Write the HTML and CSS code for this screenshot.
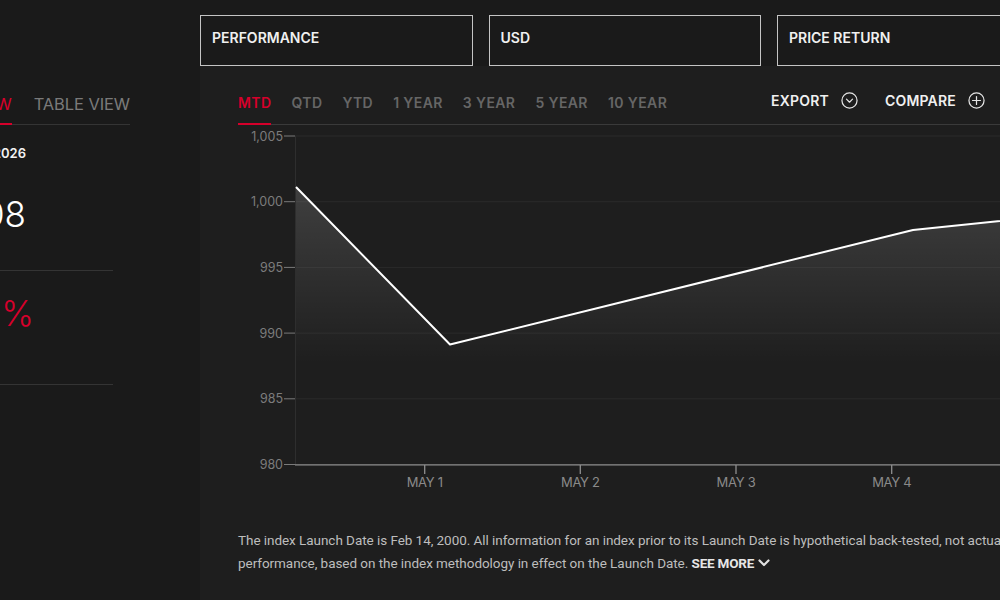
FILE: index.html
```html
<!DOCTYPE html>
<html lang="en">
<head>
<meta charset="utf-8">
<title>Index Performance</title>
<link rel="stylesheet" href="styles.css">
</head>
<body>
<div class="page">
  <aside class="side">
    <div class="view-tabs">
      <span class="view-tab active">CHART VIEW</span>
      <span class="view-tab">TABLE VIEW</span>
    </div>
    <div class="stat">
      <div class="clip-row"><span class="asof">As of May 05, 2026</span></div>
      <div class="clip-row"><span class="big">1,000.08</span></div>
    </div>
    <div class="stat stat-return">
      <div class="clip-row wide"><span class="big neg">-0.10%</span></div>
    </div>
  </aside>

  <main class="main">
    <div class="selects">
      <div class="select">PERFORMANCE</div>
      <div class="select">USD</div>
      <div class="select">PRICE RETURN</div>
    </div>

    <section class="panel">
      <div class="tabbar">
        <div class="tabbar-inner">
          <nav class="periods">
            <span class="period active">MTD</span>
            <span class="period">QTD</span>
            <span class="period">YTD</span>
            <span class="period">1 YEAR</span>
            <span class="period">3 YEAR</span>
            <span class="period">5 YEAR</span>
            <span class="period">10 YEAR</span>
          </nav>
          <div class="actions">
            <span class="action">EXPORT
              <svg class="icon" width="17" height="17" viewBox="0 0 18 18"><circle cx="9" cy="9" r="8" fill="none" stroke="#e6e6e6" stroke-width="1.3"/><path d="M5.8 7.6 L9 10.8 L12.2 7.6" fill="none" stroke="#e6e6e6" stroke-width="1.3" stroke-linecap="round" stroke-linejoin="round"/></svg>
            </span>
            <span class="action">COMPARE
              <svg class="icon" width="17" height="17" viewBox="0 0 18 18"><circle cx="9" cy="9" r="8" fill="none" stroke="#e6e6e6" stroke-width="1.3"/><path d="M9 4.8 V13.2 M4.8 9 H13.2" fill="none" stroke="#e6e6e6" stroke-width="1.3" stroke-linecap="round"/></svg>
            </span>
          </div>
        </div>
      </div>

      <svg class="chart" width="800" height="374" viewBox="238 126 800 374">
        <defs>
          <linearGradient id="fillGrad" gradientUnits="userSpaceOnUse" x1="0" y1="185" x2="0" y2="365">
            <stop offset="0" stop-color="#ffffff" stop-opacity="0.15"/>
            <stop offset="1" stop-color="#ffffff" stop-opacity="0"/>
          </linearGradient>
        </defs>
        <g stroke="#2a2a2a" stroke-width="1">
          <line x1="295" y1="137" x2="1040" y2="137"/>
          <line x1="295" y1="202.7" x2="1040" y2="202.7"/>
          <line x1="295" y1="268.4" x2="1040" y2="268.4"/>
          <line x1="295" y1="334.1" x2="1040" y2="334.1"/>
          <line x1="295" y1="399.8" x2="1040" y2="399.8"/>
        </g>
        <line x1="295.5" y1="137" x2="295.5" y2="466" stroke="#2e2e2e" stroke-width="1"/>
        <g stroke="#7a7a7a" stroke-width="1">
          <line x1="284" y1="137" x2="295" y2="137"/>
          <line x1="284" y1="202.7" x2="295" y2="202.7"/>
          <line x1="284" y1="268.4" x2="295" y2="268.4"/>
          <line x1="284" y1="334.1" x2="295" y2="334.1"/>
          <line x1="284" y1="399.8" x2="295" y2="399.8"/>
          <line x1="284" y1="465.5" x2="295" y2="465.5"/>
        </g>
        <g class="ylab" text-anchor="end">
          <text x="283" y="141.5">1,005</text>
          <text x="283" y="207.2">1,000</text>
          <text x="283" y="272.9">995</text>
          <text x="283" y="338.6">990</text>
          <text x="283" y="404.3">985</text>
          <text x="283" y="470">980</text>
        </g>
        <path d="M296 188 L450 345.5 L913 231 L1069 215 L1069 465.5 L296 465.5 Z" fill="url(#fillGrad)"/>
        <path d="M296 188 L450 345.5 L913 231 L1069 215" fill="none" stroke="#ffffff" stroke-width="2" stroke-linejoin="round"/>
        <line x1="295" y1="465.8" x2="1040" y2="465.8" stroke="#8f8f8f" stroke-width="1.3"/>
        <g stroke="#8f8f8f" stroke-width="1.3">
          <line x1="424.7" y1="466" x2="424.7" y2="475"/>
          <line x1="580.3" y1="466" x2="580.3" y2="475"/>
          <line x1="736" y1="466" x2="736" y2="475"/>
          <line x1="891.7" y1="466" x2="891.7" y2="475"/>
        </g>
        <g class="xlab" text-anchor="middle">
          <text x="424.7" y="487.5">MAY 1</text>
          <text x="580.3" y="487.5">MAY 2</text>
          <text x="736" y="487.5">MAY 3</text>
          <text x="891.7" y="487.5">MAY 4</text>
        </g>
      </svg>

      <p class="disclaimer">The index Launch Date is Feb 14, 2000. All information for an index prior to its Launch Date is hypothetical back-tested, not actual<br>performance, based on the index methodology in effect on the Launch Date. <span class="see-more">SEE MORE <svg class="chev" width="12" height="10" viewBox="0 0 12 10"><path d="M1.5 2.5 L6 7 L10.5 2.5" fill="none" stroke="#e0e0e0" stroke-width="2.2" stroke-linecap="round" stroke-linejoin="round"/></svg></span></p>
    </section>
  </main>
</div>
</body>
</html>
```

FILE: styles.css
```css
html, body {
  margin: 0;
  padding: 0;
  background: #1a1a1a;
  overflow: hidden;
}

body {
  font-family: Inter, "Liberation Sans", sans-serif;
  color: #eeeeee;
}

.page {
  display: flex;
  width: 1260px;
  height: 600px;
}

/* ---------- left column ---------- */
.side {
  width: 200px;
  flex-shrink: 0;
  overflow: hidden;
  padding-top: 94px;
  box-sizing: border-box;
}

.view-tabs {
  width: 130px;
  display: flex;
  justify-content: flex-end;
  gap: 22px;
  border-bottom: 1px solid #343434;
}

.view-tab {
  flex-shrink: 0;
  white-space: nowrap;
  font-size: 16.5px;
  line-height: 20px;
  letter-spacing: -0.1px;
  color: #7a7a7a;
  padding-bottom: 9px;
  border-bottom: 2px solid transparent;
  margin-bottom: -1px;
}

.view-tab.active {
  color: #d6002b;
  border-bottom-color: #d6002b;
}

.stat {
  width: 113px;
  border-bottom: 1px solid #343434;
  padding-bottom: 35px;
}

.clip-row {
  width: 26px;
  display: flex;
  justify-content: flex-end;
}

.clip-row.wide {
  width: 34px;
}

.asof {
  flex-shrink: 0;
  white-space: nowrap;
  font-size: 13px;
  line-height: 16px;
  font-weight: 600;
  color: #f2f2f2;
  margin-top: 20px;
  margin-bottom: 32px;
}

.big {
  flex-shrink: 0;
  white-space: nowrap;
  font-size: 35px;
  line-height: 42px;
  font-weight: 300;
  color: #ffffff;
}

.big.neg {
  color: #d6002b;
}

.stat-return {
  padding-top: 21px;
  padding-bottom: 50px;
}

/* ---------- main column ---------- */
.main {
  width: 1060px;
  flex-shrink: 0;
  display: flex;
  flex-direction: column;
}

.selects {
  display: flex;
  gap: 16px;
  padding-top: 15px;
}

.select {
  width: 272.5px;
  box-sizing: border-box;
  border: 1px solid #c4c4c4;
  padding: 13px 11px 19px;
  font-size: 14px;
  line-height: 17px;
  font-weight: 600;
  color: #f0f0f0;
}

.panel {
  flex: 1;
  background: #1e1e1e;
  padding: 28px 0 0 38px;
}

.tabbar {
  border-bottom: 1px solid #3a3a3a;
}

.tabbar-inner {
  width: 747px;
  display: flex;
  align-items: flex-start;
}

.periods {
  display: flex;
  gap: 20px;
}

.period {
  font-size: 14px;
  line-height: 17px;
  font-weight: 600;
  letter-spacing: 0.4px;
  color: #666666;
  padding-bottom: 12px;
  border-bottom: 2px solid transparent;
  margin-bottom: -1px;
}

.period.active {
  color: #d6002b;
  border-bottom-color: #d6002b;
}

.actions {
  margin-left: auto;
  display: flex;
  gap: 27px;
  margin-top: -2px;
}

.action {
  display: flex;
  align-items: center;
  gap: 12px;
  font-size: 14px;
  line-height: 17px;
  font-weight: 600;
  letter-spacing: 0.2px;
  color: #f0f0f0;
}

.icon {
  display: block;
}

.chart {
  display: block;
}

.ylab text {
  font-family: Inter, "Liberation Sans", sans-serif;
  font-size: 12.5px;
  fill: #7c7c7c;
}

.xlab text {
  font-family: Inter, "Liberation Sans", sans-serif;
  font-size: 13px;
  fill: #8a8a8a;
  letter-spacing: -0.3px;
}

.disclaimer {
  margin: 30px 0 0;
  font-family: Roboto, "Liberation Sans", sans-serif;
  font-size: 13.5px;
  line-height: 23px;
  letter-spacing: -0.05px;
  color: #bdbdbd;
  white-space: nowrap;
}

.see-more {
  font-weight: 700;
  color: #e6e6e6;
  letter-spacing: -0.2px;
}

.chev {
  display: inline-block;
  vertical-align: middle;
  margin-left: 1px;
  margin-top: -2px;
}
```
